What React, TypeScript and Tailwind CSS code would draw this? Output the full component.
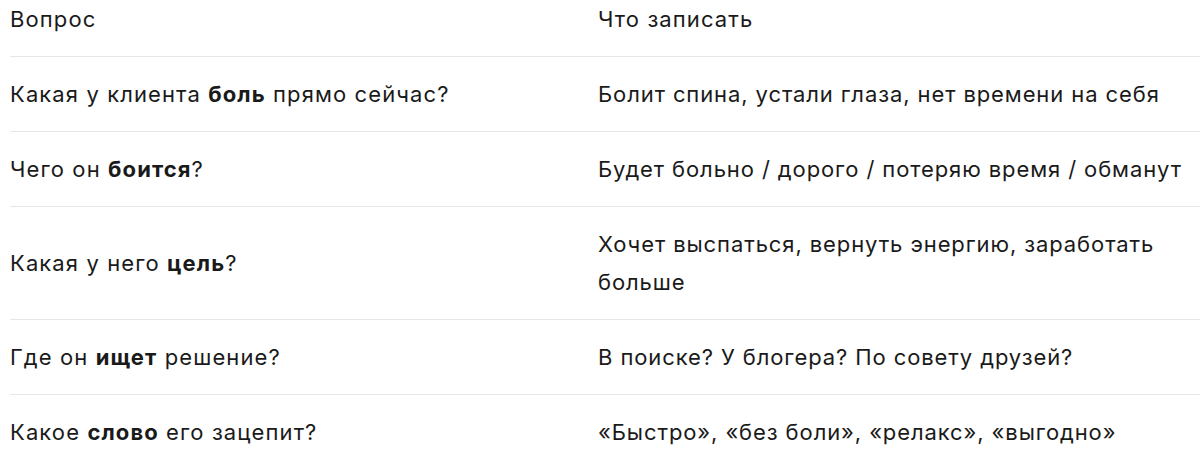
import React from "react";

const rows: { q: React.ReactNode; a: React.ReactNode }[] = [
  { q: <>Какая у клиента <b className="font-bold">боль</b> прямо сейчас?</>, a: "Болит спина, устали глаза, нет времени на себя" },
  { q: <>Чего он <b className="font-bold">боится</b>?</>, a: "Будет больно / дорого / потеряю время / обманут" },
  { q: <>Какая у него <b className="font-bold">цель</b>?</>, a: "Хочет выспаться, вернуть энергию, заработать больше" },
  { q: <>Где он <b className="font-bold">ищет</b> решение?</>, a: "В поиске? У блогера? По совету друзей?" },
  { q: <>Какое <b className="font-bold">слово</b> его зацепит?</>, a: "«Быстро», «без боли», «релакс», «выгодно»" },
];

export default function App() {
  return (
    <div className="w-[1200px] h-[461px] overflow-hidden bg-white pl-[10px] text-[22px] leading-[38px] text-[#1a1a1a]" style={{ fontFamily: "Inter, 'Noto Sans', sans-serif" }}>
      <div className="grid grid-cols-[588px_1fr] pb-[18px]">
        <div className="tracking-[1.1px]">Вопрос</div>
        <div className="tracking-[1.1px]">Что записать</div>
      </div>
      {rows.map((r, i) => (
        <div key={i} className="grid grid-cols-[588px_1fr] border-t border-[#e6e6e6] py-[18px]">
          <div className="self-center tracking-[1.1px]">{r.q}</div>
          <div className="tracking-[0.9px]">{r.a}</div>
        </div>
      ))}
    </div>
  );
}
